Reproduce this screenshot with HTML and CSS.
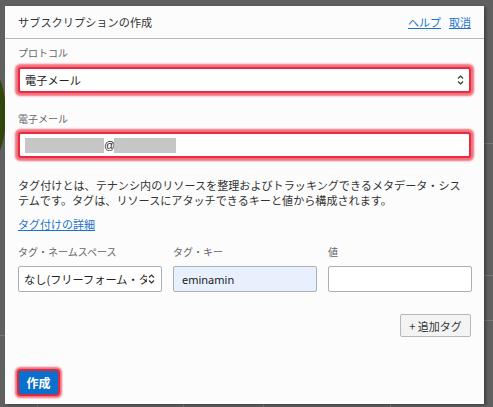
FILE: index.html
```html
<!DOCTYPE html>
<html lang="ja">
<head>
<meta charset="utf-8">
<title>サブスクリプションの作成</title>
<link rel="stylesheet" href="styles.css">
</head>
<body>
<div class="backdrop" aria-hidden="true">
  <div class="bg-blob"></div>
  <div class="bg-hline bg-l1"></div>
  <div class="bg-hline bg-r1"></div>
  <div class="bg-hline bg-r2"></div>
  <div class="bg-hline bg-r3"></div>
  <div class="bg-vline bg-v1"></div>
  <div class="bg-vline bg-v2"></div>
  <div class="bg-vline bg-v3"></div>
  <div class="bg-vline bg-v4"></div>
</div>
<div class="dialog">
  <header class="dlg-head">
    <h1 class="dlg-title">サブスクリプションの作成</h1>
    <nav class="dlg-links"><a href="#">ヘルプ</a><a href="#">取消</a></nav>
  </header>
  <div class="dlg-body">
    <div class="field-label">プロトコル</div>
    <div class="control select hl">
      <span class="select-text">電子メール</span>
      <svg class="chev" width="7" height="12" viewBox="0 0 7 12"><path d="M1 4.5 L3.5 2 L6 4.5 M1 7.5 L3.5 10 L6 7.5" fill="none" stroke="#333" stroke-width="1.2"/></svg>
    </div>

    <div class="field-label label-email">電子メール</div>
    <div class="control input hl">
      <span class="blur blur-a"></span><span class="at">@</span><span class="blur blur-b"></span>
    </div>

    <p class="desc">タグ付けとは、テナンシ内のリソースを整理およびトラッキングできるメタデータ・システムです。タグは、リソースにアタッチできるキーと値から構成されます。</p>
    <a class="more" href="#">タグ付けの詳細</a>

    <div class="tag-grid">
      <div class="field-label">タグ・ネームスペース</div>
      <div class="field-label">タグ・キー</div>
      <div class="field-label">値</div>
      <div class="control select small">
        <span class="select-text clip">なし(フリーフォーム・タグ)</span>
        <svg class="chev" width="7" height="12" viewBox="0 0 7 12"><path d="M1 4.5 L3.5 2 L6 4.5 M1 7.5 L3.5 10 L6 7.5" fill="none" stroke="#333" stroke-width="1.2"/></svg>
      </div>
      <div class="control input small filled"><span class="latin">eminamin</span></div>
      <div class="control input small"></div>
    </div>

    <div class="add-row"><button class="btn-add">+ 追加タグ</button></div>

    <div class="foot"><button class="btn-create">作成</button></div>
  </div>
</div>
</body>
</html>
```

FILE: styles.css
```css
html, body {
  margin: 0;
  height: 100%;
}
body {
  background: #606060;
  overflow: hidden;
  padding: 6px 0 0 5px;
  box-sizing: border-box;
  font-family: "Noto Sans CJK JP", "Noto Sans", sans-serif;
  color: #333;
  position: relative;
}
.backdrop {
  position: absolute;
  inset: 0;
  z-index: 0;
}
.bg-blob {
  position: absolute;
  left: -40px;
  top: 62px;
  width: 46px;
  height: 106px;
  border-radius: 50%;
  background: #32470c;
}
.bg-hline {
  position: absolute;
  height: 1px;
  background: #787878;
}
.bg-l1 { left: 0; width: 6px; top: 335px; }
.bg-r1 { left: 484px; width: 9px; top: 143px; }
.bg-r2 { left: 484px; width: 9px; top: 275px; }
.bg-r3 { left: 484px; width: 9px; top: 320px; }
.bg-vline {
  position: absolute;
  width: 1px;
  top: 404px;
  height: 3px;
  background: #7a7a7a;
}
.bg-v1 { left: 37px; }
.bg-v2 { left: 183px; }
.bg-v3 { left: 263px; }
.bg-v4 { left: 390px; }

.dialog {
  position: relative;
  z-index: 1;
  width: 479px;
  height: 398px;
  background: #fcfcfc;
  box-shadow: 2px 1px 3px rgba(0, 0, 0, 0.35);
}
.dlg-head {
  height: 33px;
  box-sizing: border-box;
  border-bottom: 1px solid #b4b9c7;
  padding: 0 13px;
  display: flex;
  align-items: center;
  justify-content: space-between;
}
.dlg-title {
  margin: 0;
  font-size: 11.2px;
  font-weight: normal;
  color: #333;
  line-height: 16px;
}
.dlg-links {
  display: flex;
  gap: 8px;
}
.dlg-links a {
  font-size: 11px;
  line-height: 16px;
  color: #1a73c8;
  text-decoration: underline;
}
.dlg-body {
  padding: 7px 13px 0 13px;
}
.field-label {
  font-size: 10px;
  line-height: 14px;
  color: #666;
  margin-bottom: 7px;
}
.label-email {
  margin-top: 19px;
  margin-bottom: 6px;
}
.control {
  height: 26px;
  box-sizing: border-box;
  border: 1px solid #aab0b8;
  border-radius: 2px;
  background: #fff;
  display: flex;
  align-items: center;
  padding: 0 5px;
}
.hl {
  border: 2px solid #ea2a40;
  box-shadow: 0 0 2px 2.5px rgba(236, 50, 70, 0.7);
  border-radius: 3px;
  width: 453px;
}
.select {
  justify-content: space-between;
}
.select-text {
  font-size: 11.2px;
  line-height: 16px;
  color: #222;
  white-space: nowrap;
}
.chev {
  flex: none;
}
.blur {
  display: block;
  height: 15px;
  background: #c6c6c6;
  filter: blur(0.6px);
}
.blur-a { width: 79px; }
.blur-b { width: 62px; }
.at {
  font-family: "Liberation Sans", sans-serif;
  font-size: 11px;
  color: #222;
  width: 10px;
  text-align: center;
}
.desc {
  margin: 20px 0 0 0;
  width: 444px;
  font-size: 11.1px;
  line-height: 15px;
  color: #333;
}
.more {
  display: inline-block;
  margin-top: 9px;
  font-size: 11px;
  line-height: 15px;
  color: #1a73c8;
  text-decoration: underline;
}
.tag-grid {
  margin-top: 11px;
  display: grid;
  grid-template-columns: 144px 144px 144px;
  column-gap: 11px;
}
.small {
  padding: 0 6px 0 5px;
}
.clip {
  overflow: hidden;
  width: 123px;
}
.filled {
  background: #e8f0fe;
  padding-left: 8px;
}
.latin {
  font-family: "Noto Sans", sans-serif;
  font-size: 11px;
  color: #222;
}
.add-row {
  margin-top: 22px;
  display: flex;
  justify-content: flex-end;
  width: 453px;
}
.btn-add {
  height: 23px;
  width: 71px;
  padding: 0;
  background: #f3f3f3;
  border: 1px solid #b4b8bf;
  border-radius: 2px;
  font-family: "Noto Sans CJK JP", "Noto Sans", sans-serif;
  font-size: 11px;
  color: #333;
}
.foot {
  margin-top: 32px;
  padding-left: 1px;
}
.btn-create {
  height: 23px;
  width: 39px;
  padding: 0;
  background: #0b6fcd;
  color: #fff;
  font-family: "Noto Sans CJK JP", sans-serif;
  font-weight: bold;
  font-size: 12px;
  border: none;
  border-radius: 2px;
  box-shadow: 0 0 0 2px #d92a40, 0 0 2px 3.5px rgba(236, 50, 70, 0.7);
}
```
